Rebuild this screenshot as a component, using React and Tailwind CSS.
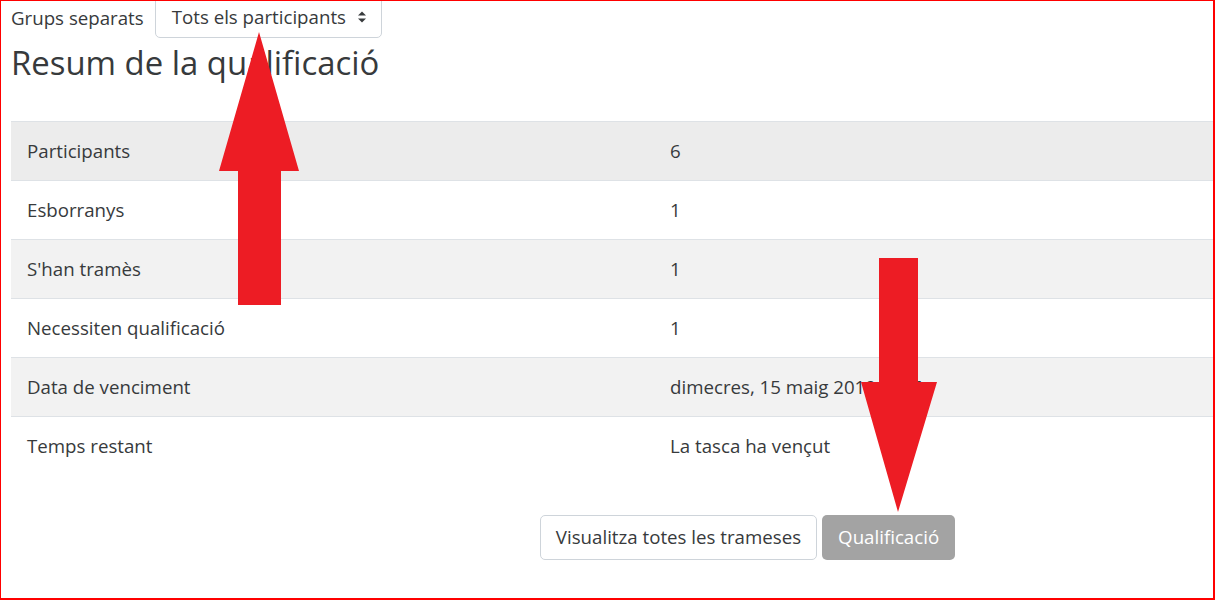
import React from 'react';

const rows = [
  { label: 'Participants', value: '6', bg: 'bg-[#ececec]' },
  { label: 'Esborranys', value: '1', bg: 'bg-white' },
  { label: "S'han tramès", value: '1', bg: 'bg-[#f2f2f2]' },
  { label: 'Necessiten qualificació', value: '1', bg: 'bg-white' },
  { label: 'Data de venciment', value: 'dimecres, 15 maig 2019, 0:36', bg: 'bg-[#f2f2f2]' },
  { label: 'Temps restant', value: 'La tasca ha vençut', bg: 'bg-white' },
];

const App = () => {
  return (
    <div className="relative w-[1215px] h-[600px] overflow-hidden bg-white text-[#373a3c] font-['Open_Sans',sans-serif]">
      <div className="pl-[11px] w-[1484px]">
        {/* selector de grups */}
        <div className="flex items-center mt-[-4px]">
          <span className="text-[18.7px] leading-[27px]">Grups separats</span>
          <div className="ml-[11px] h-[42px] w-[227px] flex items-center justify-between pl-[16px] pr-[14px] border border-[#ced4da] rounded-[5px] text-[18.7px]">
            <span>Tots els participants</span>
            <svg width="10" height="14" viewBox="0 0 10 14" className="text-[#373a3c]">
              <path d="M1 5.5 L5 1.5 L9 5.5 Z M1 8.5 L5 12.5 L9 8.5 Z" fill="currentColor" />
            </svg>
          </div>
        </div>

        <h2 className="mt-[5px] text-[32.9px] leading-[40px] font-normal">Resum de la qualificació</h2>

        {/* taula de resum */}
        <div className="mt-[38px] w-[1473px]">
          {rows.map((r) => (
            <div key={r.label} className={`flex h-[59px] items-center border-t border-[#dee2e6] text-[18.7px] ${r.bg}`}>
              <div className="w-[643px] pl-[16px]">{r.label}</div>
              <div className="pl-[16px]">{r.value}</div>
            </div>
          ))}
        </div>

        <div className="w-[1473px] flex justify-center gap-[5px] mt-[40px]">
          <button className="h-[45px] px-[15px] border border-[#ced4da] rounded-[5px] bg-white text-[18.7px] text-[#373a3c]">
            Visualitza totes les trameses
          </button>
          <button className="h-[45px] px-[16px] rounded-[5px] bg-[#a3a3a3] text-[18.7px] text-white">
            Qualificació
          </button>
        </div>
      </div>

      {/* fletxes */}
      <svg className="absolute inset-0 pointer-events-none" width="1215" height="600">
        <polygon points="259,32 299,171 281,171 281,305 238,305 238,171 219,171" fill="#ed1c24" />
        <polygon points="879,258 918,258 918,382 937,382 898,512 861,382 879,382" fill="#ed1c24" />
      </svg>

      <div className="absolute inset-0 border border-[#ff0000] border-r-2 border-b-2 pointer-events-none"></div>
    </div>
  );
};

export default App;
